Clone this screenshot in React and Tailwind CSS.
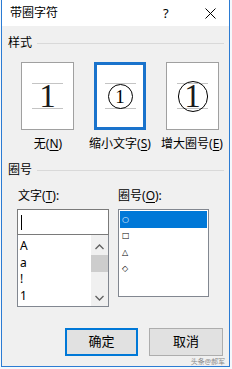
import React from 'react';

const font = "font-['Noto_Sans','Noto_Sans_CJK_SC',sans-serif]";

function Underlined({ before, letter, after }) {
  return (
    <span>
      {before}(<span className="underline underline-offset-2">{letter}</span>){after}
    </span>
  );
}

function SectionTitle({ text }) {
  return (
    <div className="flex items-center h-[14px] pl-[6px] pr-[5px]">
      <span className="text-[12px] leading-[14px]">{text}</span>
      <div className="flex-1 ml-[5px] border-t border-[#d9d9d9]" />
    </div>
  );
}

function Sample({ selected, children }) {
  return (
    <div
      className={
        'h-[68px] bg-white flex items-center justify-center ' +
        (selected ? 'w-[52px] border-[3px] border-[#1a73cc]' : 'w-[53px] border border-[#a0a0a0]')
      }
    >
      <div className="w-[31px] h-[26px] border-y border-[#c4c4c4] flex items-center justify-center">
        {children}
      </div>
    </div>
  );
}

export default function App() {
  return (
    <div className={'w-[232px] h-[369px] bg-[#f4f8fc] ' + font}>
      <div className="ml-[1px] w-[229px] h-[367px] border-x border-b border-[#2b7bd3] bg-[#f0f0f0] overflow-hidden text-black">
        {/* title bar */}
        <div className="h-[26px] bg-white flex items-center pl-[8px]">
          <span className="text-[12px] leading-[14px]">带圈字符</span>
          <span className="ml-[105px] text-[13px] leading-[14px]">?</span>
          <svg className="ml-[36px]" width="11" height="11" viewBox="0 0 11 11">
            <path d="M0.5 0.5 L10.5 10.5 M10.5 0.5 L0.5 10.5" stroke="#000" strokeWidth="1" />
          </svg>
        </div>

        <div className="mt-[10px]">
          <SectionTitle text="样式" />
        </div>

        {/* style samples */}
        <div className="mt-[12px] flex pl-[19px] gap-[20px]">
          <Sample>
            <span className="font-['Liberation_Serif',serif] text-[33px] leading-none text-[#1a1a1a]">1</span>
          </Sample>
          <Sample selected>
            <span className="w-[25px] h-[25px] shrink-0 rounded-full border border-black flex items-center justify-center font-['Liberation_Serif',serif] text-[19px] leading-none">
              1
            </span>
          </Sample>
          <Sample>
            <span className="w-[30px] h-[31px] shrink-0 rounded-full border border-black flex items-center justify-center font-['Liberation_Serif',serif] text-[33px] leading-none text-[#1a1a1a]">
              1
            </span>
          </Sample>
        </div>

        <div className="mt-[7px] flex pl-[10px] text-[12px] leading-[14px]">
          <div className="w-[72px] flex justify-center whitespace-nowrap">
            <Underlined before="无" letter="N" />
          </div>
          <div className="w-[72px] flex justify-center whitespace-nowrap">
            <Underlined before="缩小文字" letter="S" />
          </div>
          <div className="w-[72px] flex justify-center whitespace-nowrap">
            <Underlined before="增大圈号" letter="E" />
          </div>
        </div>

        <div className="mt-[12px]">
          <SectionTitle text="圈号" />
        </div>

        {/* two columns */}
        <div className="mt-[12px] flex pl-[15px] gap-[9px] text-[12px]">
          <div className="w-[92px] flex flex-col">
            <div className="h-[14px] leading-[14px] pl-[1px]">
              <Underlined before="文字" letter="T" after=":" />
            </div>
            <div className="mt-[6px] h-[26px] bg-white border border-[#7a7a7a] flex items-center pl-[3px]">
              <div className="w-px h-[15px] bg-black" />
            </div>
            <div className="h-[72px] bg-white border border-t-0 border-[#828790] flex">
              <div className="flex-1 pt-[3px] pl-[2px] leading-[16.5px]">
                <div className="h-[16.5px]">A</div>
                <div className="h-[16.5px]">a</div>
                <div className="h-[16.5px]">!</div>
                <div className="h-[16.5px]">1</div>
              </div>
              <div className="w-[17px] bg-[#f0f0f0] flex flex-col">
                <div className="h-[17px] mt-[3px] flex items-center justify-center">
                  <svg width="9" height="6" viewBox="0 0 9 6">
                    <path d="M0.5 5 L4.5 1 L8.5 5" fill="none" stroke="#606060" strokeWidth="1.3" />
                  </svg>
                </div>
                <div className="h-[17px] bg-[#cdcdcd]" />
                <div className="flex-1" />
                <div className="h-[17px] flex items-center justify-center">
                  <svg width="9" height="6" viewBox="0 0 9 6">
                    <path d="M0.5 1 L4.5 5 L8.5 1" fill="none" stroke="#606060" strokeWidth="1.3" />
                  </svg>
                </div>
              </div>
            </div>
          </div>

          <div className="w-[91px] flex flex-col">
            <div className="h-[14px] leading-[14px]">
              <Underlined before="圈号" letter="O" after=":" />
            </div>
            <div className="mt-[6px] h-[88px] bg-white border border-[#828790] p-px text-[8px] leading-[10px] font-['DejaVu_Sans',sans-serif]">
              <div className="h-[17px] bg-[#0078d7] text-white pl-[2px] flex items-center">○</div>
              <div className="h-[16.5px] pl-[2px] flex items-center">□</div>
              <div className="h-[16.5px] pl-[2px] flex items-center">△</div>
              <div className="h-[16.5px] pl-[2px] flex items-center">◇</div>
            </div>
          </div>
        </div>

        {/* buttons */}
        <div className="mt-[21px] flex pl-[63px] gap-[11px] text-[13px]">
          <div className="w-[73px] h-[28px] bg-[#e1e1e1] border-2 border-[#0078d7] flex items-center justify-center">
            确定
          </div>
          <div className="w-[74px] h-[28px] bg-[#e1e1e1] border border-[#adadad] flex items-center justify-center">
            取消
          </div>
        </div>

        <div className="flex justify-end pr-[4px] mt-px text-[7px] leading-[9px] text-[#8a8a8a]">
          头条@郝军
        </div>
      </div>
    </div>
  );
}
